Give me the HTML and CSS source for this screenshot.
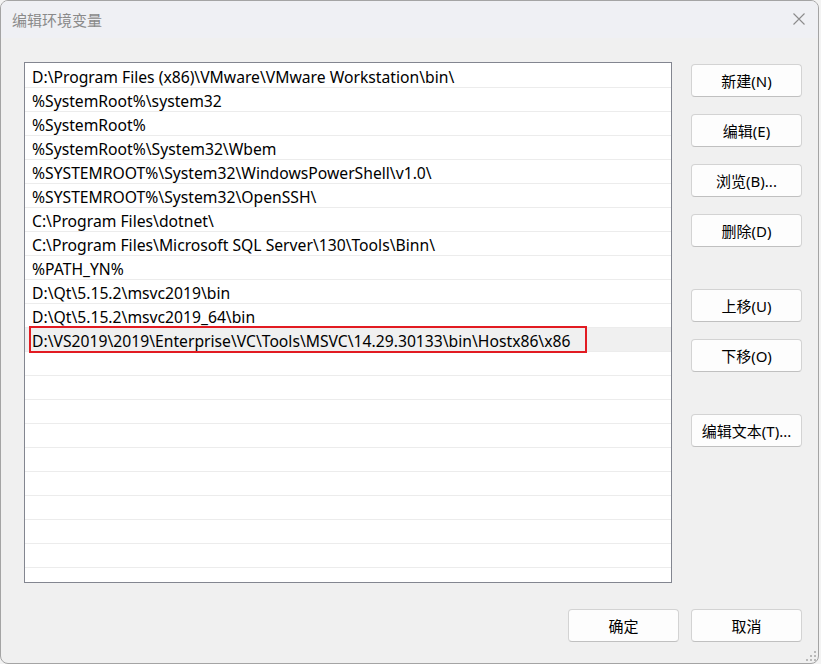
FILE: index.html
```html
<!DOCTYPE html>
<html lang="zh-CN">
<head>
<meta charset="utf-8">
<title>编辑环境变量</title>
<link rel="stylesheet" href="styles.css">
</head>
<body>
<div class="window">
  <div class="titlebar">
    <span class="title">编辑环境变量</span>
    <svg class="close" width="12" height="12" viewBox="0 0 12 12"><path d="M0.5 0.5 L11.5 11.5 M11.5 0.5 L0.5 11.5" stroke="#8c8c8c" stroke-width="1.1" fill="none"/></svg>
  </div>
  <div class="content">
    <div class="main">
      <div class="list">
        <div class="row">D:\Program Files (x86)\VMware\VMware Workstation\bin\</div>
        <div class="row">%SystemRoot%\system32</div>
        <div class="row">%SystemRoot%</div>
        <div class="row">%SystemRoot%\System32\Wbem</div>
        <div class="row">%SYSTEMROOT%\System32\WindowsPowerShell\v1.0\</div>
        <div class="row">%SYSTEMROOT%\System32\OpenSSH\</div>
        <div class="row">C:\Program Files\dotnet\</div>
        <div class="row">C:\Program Files\Microsoft SQL Server\130\Tools\Binn\</div>
        <div class="row">%PATH_YN%</div>
        <div class="row">D:\Qt\5.15.2\msvc2019\bin</div>
        <div class="row">D:\Qt\5.15.2\msvc2019_64\bin</div>
        <div class="row selected"><span class="mark"></span>D:\VS2019\2019\Enterprise\VC\Tools\MSVC\14.29.30133\bin\Hostx86\x86</div>
        <div class="row"></div>
        <div class="row"></div>
        <div class="row"></div>
        <div class="row"></div>
        <div class="row"></div>
        <div class="row"></div>
        <div class="row"></div>
        <div class="row"></div>
        <div class="row"></div>
        <div class="row"></div>
      </div>
      <div class="side">
        <div class="group">
          <button class="btn">新建(N)</button>
          <button class="btn">编辑(E)</button>
          <button class="btn">浏览(B)...</button>
          <button class="btn">删除(D)</button>
        </div>
        <div class="group">
          <button class="btn">上移(U)</button>
          <button class="btn">下移(O)</button>
        </div>
        <div class="group">
          <button class="btn">编辑文本(T)...</button>
        </div>
      </div>
    </div>
    <div class="footer">
      <button class="btn">确定</button>
      <button class="btn">取消</button>
    </div>
  </div>
  <div class="grip">
    <i class="d d1"></i><i class="d d2"></i><i class="d d3"></i><i class="d d4"></i><i class="d d5"></i><i class="d d6"></i>
  </div>
</div>
</body>
</html>
```

FILE: styles.css
```css
html, body {
  margin: 0;
  padding: 0;
  background: #f3f3f3;
}
body {
  font-family: "Noto Sans", "Noto Sans CJK SC", sans-serif;
  font-size: 15.7px;
  color: #000;
}
.window {
  position: relative;
  width: 819px;
  height: 664px;
  box-sizing: border-box;
  border: 1px solid #a4a4a4;
  border-radius: 8px;
  background: #f0f0f0;
  overflow: hidden;
  display: flex;
  flex-direction: column;
}
.titlebar {
  height: 37px;
  box-sizing: border-box;
  flex: none;
  background: #eff0f4;
  display: flex;
  align-items: center;
  justify-content: space-between;
  padding: 0 13px 1px 11px;
}
.title {
  font-size: 15px;
  color: #8a8a8a;
  font-family: "Noto Sans CJK SC", sans-serif;
}
.content {
  flex: 1;
  display: flex;
  flex-direction: column;
  padding: 24px 16px 0 23px;
}
.main {
  display: flex;
  gap: 19px;
}
.list {
  width: 648px;
  height: 521px;
  box-sizing: border-box;
  border: 1px solid #838690;
  background: #fff;
  overflow: hidden;
  padding-top: 1px;
}
.row {
  position: relative;
  height: 24px;
  box-sizing: border-box;
  border-bottom: 1px solid #ececec;
  padding: 3px 0 0 7px;
  line-height: 20px;
  white-space: nowrap;
}
.row.selected {
  background: #f0f0f0;
}
.mark {
  position: absolute;
  left: 4px;
  top: -2px;
  width: 558px;
  height: 27px;
  box-sizing: border-box;
  border: 2px solid #e21b22;
}
.side {
  display: flex;
  flex-direction: column;
  gap: 42px;
  padding-top: 2px;
}
.group {
  display: flex;
  flex-direction: column;
  gap: 17px;
}
.btn {
  width: 111px;
  height: 33px;
  box-sizing: border-box;
  border: 1px solid #d3d3d3;
  border-bottom-color: #c0c0c0;
  border-radius: 4px;
  background: #fdfdfd;
  font-family: "Noto Sans", "Noto Sans CJK SC", sans-serif;
  font-size: 15px;
  color: #000;
  padding: 0;
}
.footer {
  display: flex;
  justify-content: flex-end;
  gap: 12px;
  margin-top: 26px;
}
.grip {
  position: absolute;
  right: 2px;
  bottom: 2px;
  width: 10px;
  height: 10px;
}
.d {
  position: absolute;
  width: 2px;
  height: 2px;
  background: #b9b9b9;
}
.d1 { right: 0; bottom: 0; }
.d2 { right: 4px; bottom: 0; }
.d3 { right: 8px; bottom: 0; }
.d4 { right: 0; bottom: 4px; }
.d5 { right: 4px; bottom: 4px; }
.d6 { right: 0; bottom: 8px; }
```
